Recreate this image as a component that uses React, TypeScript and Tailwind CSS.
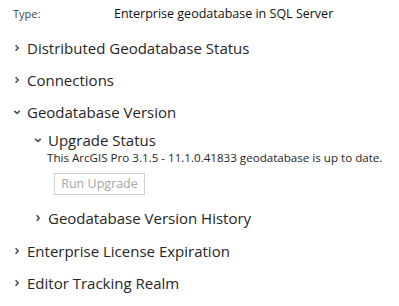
import React from "react";

const Chev = ({ open }: { open?: boolean }) => (
  <svg width="8" height="8" viewBox="0 0 8 8" className="shrink-0">
    {open ? (
      <path d="M1.2 2.8 L4 5.4 L6.8 2.8" fill="none" stroke="#505050" strokeWidth="1.6" />
    ) : (
      <path d="M2.6 1.2 L5.2 4 L2.6 6.8" fill="none" stroke="#505050" strokeWidth="1.6" />
    )}
  </svg>
);

const Row = ({ label, open, h, indent }: { label: string; open?: boolean; h: string; indent: string }) => (
  <div className={`flex items-center ${h} ${indent}`}>
    <Chev open={open} />
    <span className="ml-[6px] text-[15px] text-[#262626] leading-none whitespace-nowrap">{label}</span>
  </div>
);

export default function App() {
  return (
    <div className="w-[399px] h-[306px] bg-white overflow-hidden" style={{ fontFamily: '"Open Sans", "Noto Sans", sans-serif' }}>
      <div className="flex items-center h-[28px] whitespace-nowrap">
        <span className="ml-[13px] w-[101px] text-[11px] text-[#444]">Type:</span>
        <span className="text-[12.5px] text-[#111]">Enterprise geodatabase in SQL Server</span>
      </div>
      <div className="h-[4px]" />
      <Row label="Distributed Geodatabase Status" h="h-[32px]" indent="pl-[13px]" />
      <Row label="Connections" h="h-[32px]" indent="pl-[13px]" />
      <Row label="Geodatabase Version" open h="h-[32px]" indent="pl-[13px]" />
      <div className="h-[2px]" />
      <Row label="Upgrade Status" open h="h-[20px]" indent="pl-[34px]" />
      <div className="h-[16px] pl-[47px] text-[11.6px] leading-[16px] text-[#262626]">
        This ArcGIS Pro 3.1.5 - 11.1.0.41833 geodatabase is up to date.
      </div>
      <div className="pl-[54px] pt-[7px]">
        <div className="w-[91px] h-[22px] border border-[#cfcfcf] flex items-center justify-center text-[12.5px] text-[#a6a6a6] whitespace-nowrap">
          Run Upgrade
        </div>
      </div>
      <div className="h-[13px]" />
      <Row label="Geodatabase Version History" h="h-[20px]" indent="pl-[34px]" />
      <div className="h-[7px]" />
      <Row label="Enterprise License Expiration" h="h-[32px]" indent="pl-[13px]" />
      <Row label="Editor Tracking Realm" h="h-[32px]" indent="pl-[13px]" />
    </div>
  );
}
